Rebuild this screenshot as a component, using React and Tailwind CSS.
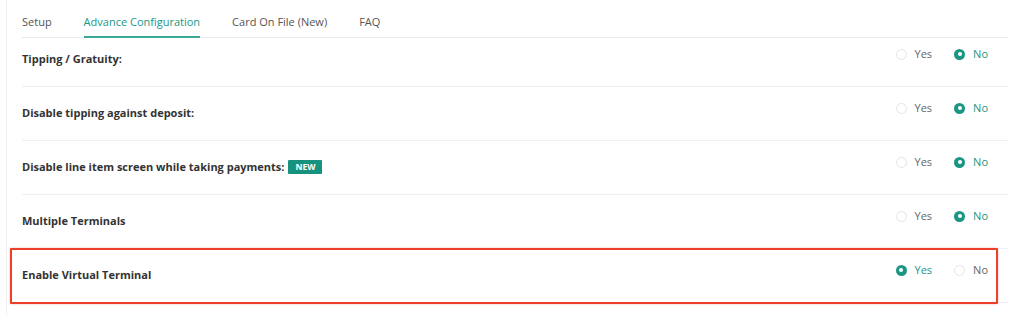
import React from 'react';

const TEAL = 'text-[#1a9683]';

const tabs = ['Setup', 'Advance Configuration', 'Card On File (New)', 'FAQ'];

const settings = [
  { label: 'Tipping / Gratuity:', value: 'no' },
  { label: 'Disable tipping against deposit:', value: 'no' },
  { label: 'Disable line item screen while taking payments:', value: 'no', badge: 'NEW' },
  { label: 'Multiple Terminals', value: 'no' },
  { label: 'Enable Virtual Terminal', value: 'yes', highlight: true },
];

// Radio dot, filled teal when checked
const Radio = ({ checked, text }) => (
  <label className="flex items-center gap-[8px]">
    {checked ? (
      <span className="w-[11px] h-[11px] rounded-full bg-[#1a9683] flex items-center justify-center">
        <span className="w-[4px] h-[4px] rounded-full bg-white" />
      </span>
    ) : (
      <span className="w-[11px] h-[11px] rounded-full border border-[#e3e5e8] bg-white" />
    )}
    <span className={`text-[11px] leading-[16px] ${checked ? TEAL : 'text-[#666]'}`}>{text}</span>
  </label>
);

const SettingRow = ({ label, value, badge, highlight, first }) => (
  <div
    className={`relative flex justify-between items-start border-b border-[#eef0f2] ${
      first ? 'h-[49px] pt-[8px]' : 'h-[54px] pt-[13px]'
    }`}
  >
    <div className="flex items-center gap-[4px] mt-[5px]">
      <span className="text-[11px] leading-[16px] font-bold text-[#333]">{label}</span>
      {badge && (
        <span className="bg-[#17927f] text-white text-[8.5px] font-bold leading-[14px] px-[7px] rounded-[1px]">
          {badge}
        </span>
      )}
    </div>
    <div className="flex items-center gap-[22px] pr-[20px]">
      <Radio checked={value === 'yes'} text="Yes" />
      <Radio checked={value === 'no'} text="No" />
    </div>
    {highlight && (
      <div className="absolute left-[-12px] right-[10px] top-[-1px] bottom-[-2px] border-2 border-[#ec3f2c] rounded-[1px] shadow-[0_0_2px_rgba(236,63,44,0.4)]" />
    )}
  </div>
);

export default function App() {
  return (
    <div className="w-[1018px] h-[315px] bg-white overflow-hidden" style={{ fontFamily: '"Open Sans", sans-serif' }}>
      <div className="ml-[6px] h-full border-l border-[#eceef2] pl-[15px] pr-[10px]">
        <div className="flex gap-[32px] border-b border-[#e8eaed] pt-[14px]">
          {tabs.map((t, i) => (
            <div
              key={t}
              className={`text-[11px] leading-[16px] pb-[6px] ${
                i === 1 ? `${TEAL} border-b-2 border-[#3aa996] -mb-[1px]` : 'text-[#555] border-b-2 border-transparent -mb-[1px]'
              }`}
            >
              {t}
            </div>
          ))}
        </div>
        {settings.map((s, i) => (
          <SettingRow key={s.label} {...s} first={i === 0} />
        ))}
      </div>
    </div>
  );
}
